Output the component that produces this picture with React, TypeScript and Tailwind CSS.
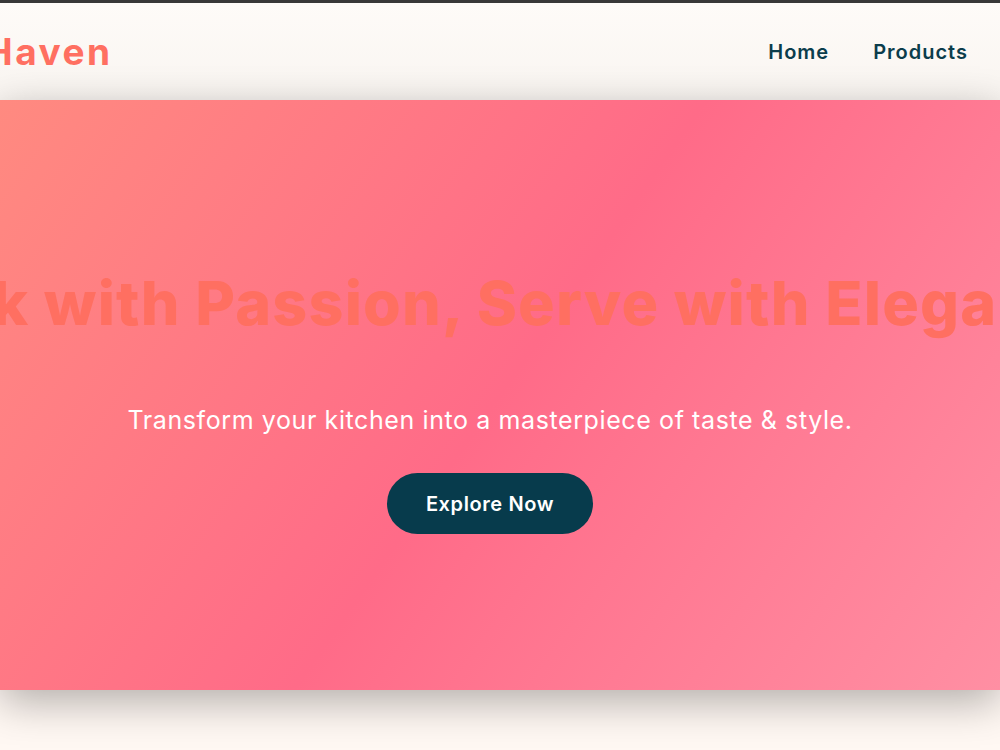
import React from "react";

export default function App() {
  const font = { fontFamily: "Inter, 'Noto Sans', sans-serif" };
  return (
    <div className="min-h-screen w-full overflow-hidden bg-[#fff8f3]" style={font}>
      <div className="h-[3px] bg-[#383838]" />
      <header className="flex h-[97px] items-center justify-between bg-gradient-to-b from-[#fefbf8] to-[#f9f5f1] pr-[32px]">
        <div className="ml-[-15px] text-[37px] font-bold tracking-[2.5px] text-[#ff6f61]">Haven</div>
        <nav className="flex items-center gap-[44px] text-[20px] font-semibold tracking-[1px] text-[#0b3d4c]">
          <a>Home</a>
          <a>Products</a>
        </nav>
      </header>
      <section className="relative z-10 flex h-[590px] flex-col items-center justify-center bg-[linear-gradient(125deg,#ff8a80_0%,#ff6b88_50%,#ff8fa3_100%)] pr-[20px] pt-[10px] shadow-[0_12px_40px_rgba(0,0,0,0.3)]">
        <h1 className="whitespace-nowrap text-[61px] font-extrabold leading-[74px] tracking-[1.2px] text-[#ff6f61]">
          Cook with Passion, Serve with Elegance
        </h1>
        <p className="mt-[62px] text-[25px] leading-[36px] tracking-[0.6px] text-white">
          Transform your kitchen into a masterpiece of taste &amp; style.
        </p>
        <button className="mt-[35px] flex h-[61px] w-[206px] items-center justify-center rounded-full bg-[#073b4c] text-[20px] font-semibold tracking-[0.6px] text-white">
          Explore Now
        </button>
      </section>
    </div>
  );
}
